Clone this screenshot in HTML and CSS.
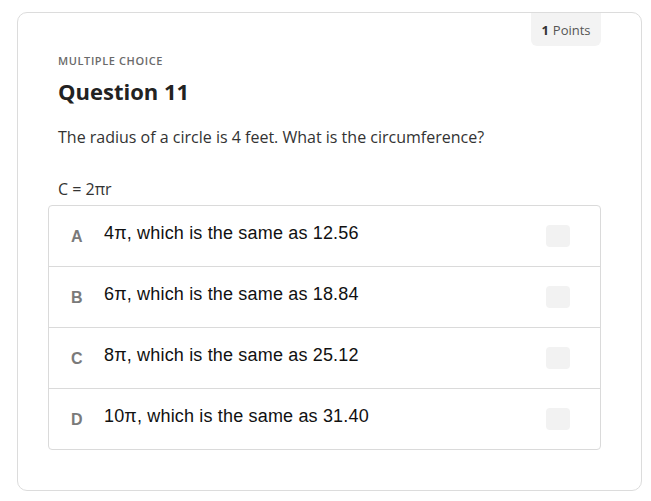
FILE: index.html
```html
<!DOCTYPE html>
<html lang="en">
<head>
<meta charset="utf-8">
<link rel="stylesheet" href="styles.css">
</head>
<body>
<div class="card">
  <div class="badge-row"><div class="badge"><b>1</b> Points</div></div>
  <div class="kind">MULTIPLE CHOICE</div>
  <h1 class="title">Question 11</h1>
  <p class="question">The radius of a circle is 4 feet. What is the circumference?</p>
  <p class="formula">C = 2πr</p>
  <div class="options">
    <div class="option"><span class="letter">A</span><span class="text">4π, which is the same as 12.56</span><span class="check"></span></div>
    <div class="option"><span class="letter">B</span><span class="text">6π, which is the same as 18.84</span><span class="check"></span></div>
    <div class="option"><span class="letter">C</span><span class="text">8π, which is the same as 25.12</span><span class="check"></span></div>
    <div class="option"><span class="letter">D</span><span class="text">10π, which is the same as 31.40</span><span class="check"></span></div>
  </div>
</div>
</body>
</html>
```
FILE: styles.css
```css
html, body { margin: 0; padding: 0; background: #fff; }
body { font-family: "Open Sans", "Noto Sans", sans-serif; color: #333; }
.card {
  box-sizing: border-box;
  margin: 12px 0 0 17px;
  width: 625px;
  height: 479px;
  border: 1px solid #dcdcdc;
  border-radius: 10px;
  padding: 0 40px 40px 40px;
}
.badge-row { display: flex; justify-content: flex-end; height: 33px; }
.badge {
  background: #f3f3f3;
  border-radius: 0 0 6px 6px;
  width: 70px;
  height: 33px;
  display: flex; align-items: center; justify-content: center;
  font-size: 13px; color: #555;
}
.badge b { font-weight: 700; color: #333; margin-right: 4px; }
.kind {
  margin-top: 7px;
  font-size: 11px; line-height: 16px;
  font-weight: 600; letter-spacing: 0.6px; color: #6a6a6a;
}
.title {
  margin: 8px 0 0 0;
  font-size: 22px; line-height: 28px; font-weight: 700; color: #222;
}
.question {
  margin: 20px 0 0 0;
  font-size: 16px; line-height: 24px; color: #333;
}
.formula {
  margin: 28px 0 0 0;
  font-size: 16px; line-height: 24px; color: #333;
}
.options {
  margin: 4px 0 0 -10px;
  border: 1px solid #dadada;
  border-radius: 4px;
}
.option {
  display: flex; align-items: center;
  height: 60px;
  padding: 0 30px 0 22px;
  border-top: 1px solid #dadada;
}
.option:first-child { border-top: none; }
.letter {
  width: 33px;
  font-family: "Liberation Sans", Arial, sans-serif;
  font-weight: 700; font-size: 16px; color: #7a7a7a;
  padding-top: 2px;
}
.text {
  flex: 1;
  font-family: "Liberation Sans", Arial, sans-serif;
  font-size: 18px; color: #111;
  letter-spacing: 0.17px;
  margin-top: -5px;
}
.check {
  width: 24px; height: 22px;
  background: #f2f2f2;
  border-radius: 4px;
}
```
